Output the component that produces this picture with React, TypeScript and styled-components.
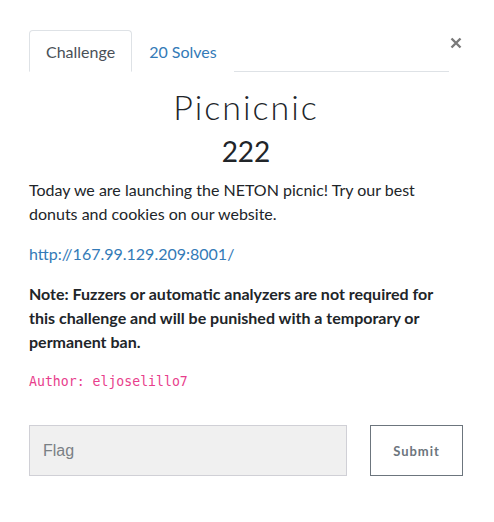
import React from "react";
import styled, { createGlobalStyle } from "styled-components";

const Global = createGlobalStyle`
  html, body { margin: 0; padding: 0; background: #fff; }
  body { font-family: Lato, "Noto Sans", sans-serif; color: #212529; }
  * { box-sizing: border-box; }
`;

const Modal = styled.div`
  position: relative;
  width: 494px;
  padding: 30px 31px 0 29px;
`;

const Close = styled.button`
  position: absolute;
  top: 30px;
  right: 30px;
  border: 0;
  background: transparent;
  padding: 0;
  width: 16px;
  height: 26px;
  display: flex;
  align-items: center;
  justify-content: center;
  cursor: pointer;
`;

const Tabs = styled.div`
  display: flex;
  width: 420px;
  border-bottom: 1px solid #dee2e6;
`;

const Tab = styled.div<{ $active?: boolean }>`
  height: 42px;
  padding: 0 16px;
  display: flex;
  align-items: center;
  font-size: 16px;
  margin-bottom: -1px;
  border: 1px solid ${(p) => (p.$active ? "#dee2e6" : "transparent")};
  border-bottom-color: ${(p) => (p.$active ? "#fff" : "transparent")};
  border-radius: 4px 4px 0 0;
  background: #fff;
  color: ${(p) => (p.$active ? "#495057" : "#337ab7")};
`;

const Title = styled.h3`
  margin: 15px 0 0;
  text-align: center;
  font-family: Lato, sans-serif;
  font-weight: 300;
  font-size: 34px;
  letter-spacing: 2px;
  line-height: 40px;
  color: #212529;
`;

const Value = styled.h4`
  margin: 7px 0 0;
  text-align: center;
  font-weight: 400;
  font-size: 28px;
  line-height: 34px;
  color: #212529;
`;

const Desc = styled.div`
  margin-top: 10px;
  font-size: 16px;
  line-height: 24px;
  width: 420px;
  p { margin: 0 0 16px; }
`;

const Link = styled.a`
  color: #337ab7;
  text-decoration: none;
`;

const Author = styled.code`
  display: block;
  margin-top: 5px;
  font-family: "DejaVu Sans Mono", monospace;
  font-size: 13.2px;
  color: #e83e8c;
`;

const FormRow = styled.div`
  display: flex;
  gap: 23px;
  margin-top: 31px;
`;

const Input = styled.input`
  width: 318px;
  height: 51px;
  background: #f0f0f0;
  border: 1px solid #d0d0d6;
  padding: 0 13px;
  font-family: "Liberation Sans", Arial, sans-serif;
  font-size: 16px;
  color: #495057;
  &::placeholder { color: #7a8085; }
`;

const Submit = styled.button`
  width: 93px;
  height: 51px;
  background: #fff;
  border: 1px solid #6c757d;
  font-family: Lato, sans-serif;
  font-weight: 700;
  font-size: 13px;
  letter-spacing: 1px;
  color: #6c757d;
`;

export default function App() {
  return (
    <>
      <Global />
      <Modal>
        <Close aria-label="Close">
          <svg width="12" height="12" viewBox="0 0 12 12">
            <path d="M1.5 1.5 L10.5 10.5 M10.5 1.5 L1.5 10.5" stroke="#7a7a7a" strokeWidth="2.4" />
          </svg>
        </Close>
        <Tabs>
          <Tab $active>Challenge</Tab>
          <Tab>20 Solves</Tab>
        </Tabs>
        <Title>Picnicnic</Title>
        <Value>222</Value>
        <Desc>
          <p>Today we are launching the NETON picnic! Try our best donuts and cookies on our website.</p>
          <p><Link href="#">http://167.99.129.209:8001/</Link></p>
          <p><strong>Note: Fuzzers or automatic analyzers are not required for this challenge and will be punished with a temporary or permanent ban.</strong></p>
          <Author>Author: eljoselillo7</Author>
        </Desc>
        <FormRow>
          <Input placeholder="Flag" />
          <Submit>Submit</Submit>
        </FormRow>
      </Modal>
    </>
  );
}
